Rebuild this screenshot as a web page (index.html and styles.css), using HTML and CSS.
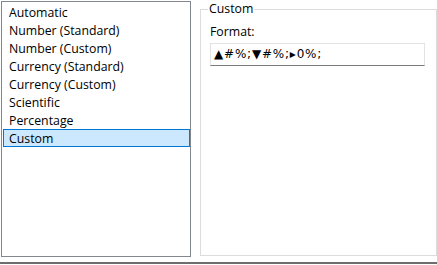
FILE: index.html
```html
<!DOCTYPE html>
<html lang="en">
<head>
  <meta charset="utf-8">
  <title>Format cells</title>
  <link rel="stylesheet" href="styles.css">
</head>
<body>
  <div class="main">
    <div class="format-list">
      <div class="format-item">Automatic</div>
      <div class="format-item">Number (Standard)</div>
      <div class="format-item">Number (Custom)</div>
      <div class="format-item">Currency (Standard)</div>
      <div class="format-item">Currency (Custom)</div>
      <div class="format-item">Scientific</div>
      <div class="format-item">Percentage</div>
      <div class="format-item selected">Custom</div>
    </div>
    <fieldset class="format-group">
      <legend>Custom</legend>
      <div class="field-label">Format:</div>
      <div class="field-input">▲#%;▼#%;▸0%;</div>
    </fieldset>
  </div>
  <div class="footer-line"></div>
</body>
</html>
```

FILE: styles.css
```css
html, body {
  margin: 0;
  padding: 0;
  background: #fff;
  font-family: 'Open Sans', 'DejaVu Sans', sans-serif;
  font-size: 12.3px;
  color: #000;
  overflow: hidden;
}
.main {
  display: flex;
  align-items: flex-start;
  padding: 1px 0 0 1px;
}
.format-list {
  box-sizing: border-box;
  width: 190px;
  height: 256px;
  border: 1px solid #828790;
  padding: 1px 0 1px 1px;
}
.format-item {
  box-sizing: border-box;
  height: 18px;
  line-height: 17px;
  padding-left: 5px;
  border: 1px solid transparent;
  white-space: nowrap;
}
.format-item.selected {
  background: #cce8ff;
  border-color: #0078d7;
}
.format-group {
  box-sizing: border-box;
  margin: 1px 0 0 9px;
  width: 237px;
  height: 254px;
  border: 1px solid #dcdcdc;
  padding: 0 11px 0 9px;
}
.format-group legend {
  padding: 0 1px;
  margin-left: -2px;
  line-height: 14px;
}
.field-label {
  margin-top: 8px;
  line-height: 16px;
}
.field-input {
  box-sizing: border-box;
  margin-top: 3px;
  height: 23px;
  line-height: 21px;
  padding-left: 3px;
  border: 1px solid #e3e3e3;
  border-bottom-color: #7a7a7a;
  font-family: 'DejaVu Sans', sans-serif;
  font-size: 12px;
  letter-spacing: 0.8px;
}
.footer-line {
  margin-top: 5px;
  height: 2px;
  background: #6d6d6d;
}
```
